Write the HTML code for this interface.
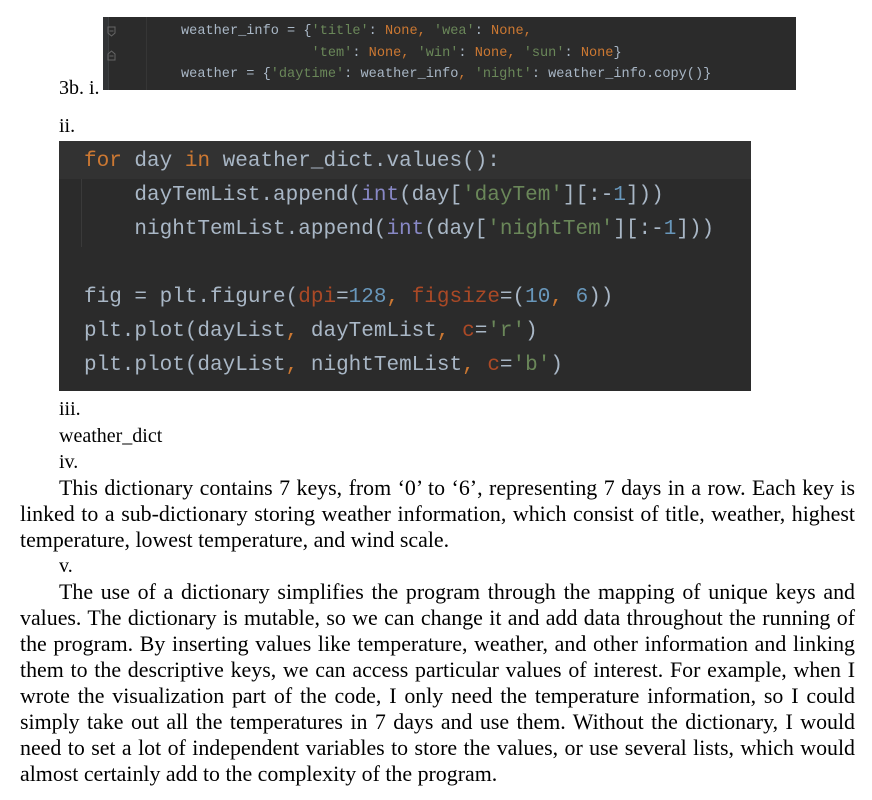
<!DOCTYPE html>
<html><head><meta charset="utf-8"><style>
body{margin:0;background:#fff;width:872px;height:800px;position:relative;overflow:hidden}
.t{position:absolute;font-family:"Liberation Serif",serif;font-size:20px;line-height:26px;color:#000;white-space:nowrap}
.j{position:absolute;left:20px;font-family:"Liberation Serif",serif;font-size:21.9px;line-height:26px;color:#000;white-space:nowrap;width:835px;text-align:justify;text-align-last:justify}
.j.l{text-align-last:left}
.code{position:absolute;background:#2b2b2b;font-family:"Liberation Mono","DejaVu Sans Mono",monospace;color:#a9b7c6;white-space:pre}
.k{color:#cc7832}.s{color:#6a8759}.n{color:#6897bb}.b{color:#8888c6}.p{color:#aa4926}
</style></head><body>
<div class="code" style="left:103px;top:17px;width:693px;height:73px;background:#2b2b2b">
<div style="position:absolute;left:0;top:0;width:5px;height:73px;background:#313335"></div>
<div style="position:absolute;left:5px;top:0;width:1px;height:73px;background:#3c3f41"></div>
<div style="position:absolute;left:43px;top:0;width:1px;height:73px;background:#363636"></div>
<svg style="position:absolute;left:4px;top:9px" width="10" height="36"><path d="M1 1h7v6l-3.5 3l-3.5-3z M2.5 5h4" fill="none" stroke="#666" stroke-width="1"/><path d="M1 34h7v-6l-3.5-3l-3.5 3z M2.5 30h4" fill="none" stroke="#666" stroke-width="1"/></svg>
<div style="position:absolute;left:78px;top:4px;font-size:13.6px;line-height:21.5px">weather_info = {<span class="s">'title'</span>: <span class="k">None, </span><span class="s">'wea'</span>: <span class="k">None,</span>
                <span class="s">'tem'</span>: <span class="k">None, </span><span class="s">'win'</span>: <span class="k">None, </span><span class="s">'sun'</span>: <span class="k">None</span>}
weather = {<span class="s">'daytime'</span>: weather_info<span class="k">, </span><span class="s">'night'</span>: weather_info.copy()}</div>
</div>
<div class="t" style="left:59px;top:75px">3b. i.</div>
<div class="t" style="left:59px;top:113px">ii.</div>
<div class="code" style="left:59px;top:141px;width:692px;height:250px">
<div style="position:absolute;left:0;top:0;width:692px;height:38px;background:#323232"></div>
<div style="position:absolute;left:22px;top:38px;width:1px;height:68px;background:#3a3a3a"></div>
<div style="position:absolute;left:25px;top:4px;font-size:21px;line-height:34px"><span class="k">for </span>day <span class="k">in </span>weather_dict.values():
    dayTemList.append(<span class="b">int</span>(day[<span class="s">'dayTem'</span>][:-<span class="n">1</span>]))
    nightTemList.append(<span class="b">int</span>(day[<span class="s">'nightTem'</span>][:-<span class="n">1</span>]))

fig = plt.figure(<span class="p">dpi</span>=<span class="n">128</span><span class="k">, </span><span class="p">figsize</span>=(<span class="n">10</span><span class="k">, </span><span class="n">6</span>))
plt.plot(dayList<span class="k">, </span>dayTemList<span class="k">, </span><span class="p">c</span>=<span class="s">'r'</span>)
plt.plot(dayList<span class="k">, </span>nightTemList<span class="k">, </span><span class="p">c</span>=<span class="s">'b'</span>)</div>
</div>
<div class="t" style="left:59px;top:396px">iii.</div>
<div class="t" style="left:59px;top:423px">weather_dict</div>
<div class="t" style="left:59px;top:449px">iv.</div>
<div class="j" style="top:475px;text-indent:39px">This dictionary contains 7 keys, from ‘0’ to ‘6’, representing 7 days in a row. Each key is</div>
<div class="j" style="top:501px">linked to a sub-dictionary storing weather information, which consist of title, weather, highest</div>
<div class="j l" style="top:527px">temperature, lowest temperature, and wind scale.</div>
<div class="t" style="left:59px;top:553px">v.</div>
<div class="j" style="top:579px;text-indent:39px">The use of a dictionary simplifies the program through the mapping of unique keys and</div>
<div class="j" style="top:605px">values. The dictionary is mutable, so we can change it and add data throughout the running of</div>
<div class="j" style="top:631px">the program. By inserting values like temperature, weather, and other information and linking</div>
<div class="j" style="top:657px">them to the descriptive keys, we can access particular values of interest. For example, when I</div>
<div class="j" style="top:683px">wrote the visualization part of the code, I only need the temperature information, so I could</div>
<div class="j" style="top:709px">simply take out all the temperatures in 7 days and use them. Without the dictionary, I would</div>
<div class="j" style="top:735px">need to set a lot of independent variables to store the values, or use several lists, which would</div>
<div class="j l" style="top:761px">almost certainly add to the complexity of the program.</div>
</body></html>
